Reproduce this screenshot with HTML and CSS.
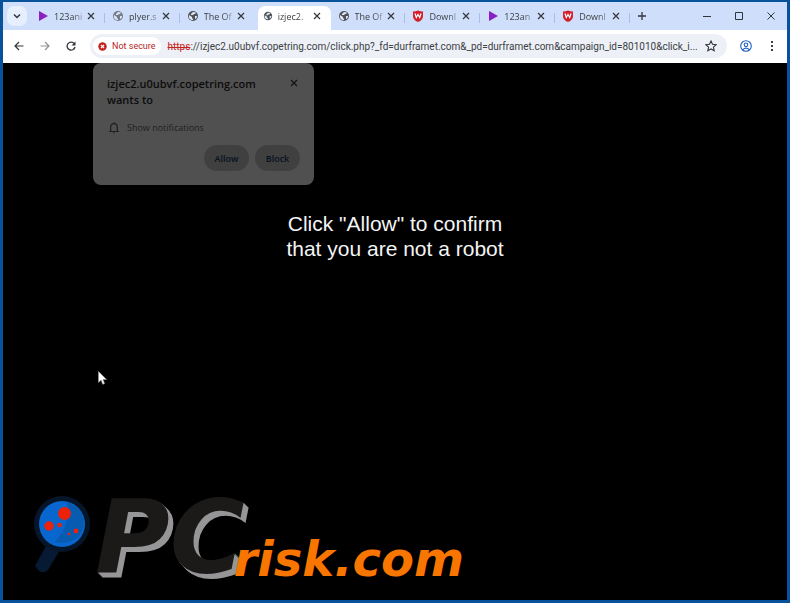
FILE: index.html
```html
<!DOCTYPE html>
<html lang="en">
<head>
    <meta charset="UTF-8">
    <meta name="viewport" content="width=device-width, initial-scale=1.0">
    <title>izjec2.u0ubvf.copetring.com</title>
    <link rel="stylesheet" href="styles.css">
</head>
<body>
    <!-- shared icons -->
    <svg class="sprite" aria-hidden="true">
        <symbol id="play" viewBox="0 0 12 12"><path d="M2 1l9 5-9 5z" fill="#8a1fc4"/></symbol>
        <symbol id="globe" viewBox="0 0 12 12">
            <circle cx="6" cy="6" r="5" fill="#505358"/>
            <path d="M2 5l3 2v1l1 1v1C3 10 1.500 8 2 5zM6 2l3 .5L8 4H7L6 5H4V4l1-1zM8 6l2 0c0 2-1 3-2 3z" fill="#dfe7f8"/>
        </symbol>
        <symbol id="shield" viewBox="0 0 12 12">
            <path d="M1 1.500Q4 1.500 6 .5q2 1 5 1V6q0 4-5 6-5-2-5-6z" fill="#d41f2b"/>
            <path d="M3 3.500l1.300 4L6 4.500l1.700 3L9 3.500" fill="none" stroke="#fff" stroke-width="1.200"/>
        </symbol>
        <symbol id="close" viewBox="0 0 8 8"><path d="M1 1l6 6M7 1L1 7" fill="none" stroke="currentColor" stroke-width="1.200"/></symbol>
    </svg>

    <div class="browser">
        <div class="tab-strip">
            <button class="tab-search" aria-label="Search tabs">
                <svg width="8" height="8" viewBox="0 0 8 8"><path d="M1 2.500l3 3 3-3" fill="none" stroke="currentColor" stroke-width="1.500"/></svg>
            </button>
            <div class="tabs">
                <div class="tab">
                    <svg class="favicon"><use href="#play"/></svg>
                    <span class="tab-title">123ani</span>
                    <button class="tab-close" aria-label="Close tab"><svg><use href="#close"/></svg></button>
                </div>
                <div class="tab">
                    <svg class="favicon faded"><use href="#globe"/></svg>
                    <span class="tab-title">plyer.s</span>
                    <button class="tab-close" aria-label="Close tab"><svg><use href="#close"/></svg></button>
                </div>
                <div class="tab before-active">
                    <svg class="favicon"><use href="#globe"/></svg>
                    <span class="tab-title">The Of</span>
                    <button class="tab-close" aria-label="Close tab"><svg><use href="#close"/></svg></button>
                </div>
                <div class="tab active">
                    <svg class="favicon"><use href="#globe"/></svg>
                    <span class="tab-title">izjec2.</span>
                    <button class="tab-close" aria-label="Close tab"><svg><use href="#close"/></svg></button>
                </div>
                <div class="tab">
                    <svg class="favicon"><use href="#globe"/></svg>
                    <span class="tab-title">The Of</span>
                    <button class="tab-close" aria-label="Close tab"><svg><use href="#close"/></svg></button>
                </div>
                <div class="tab">
                    <svg class="favicon"><use href="#shield"/></svg>
                    <span class="tab-title">Downl</span>
                    <button class="tab-close" aria-label="Close tab"><svg><use href="#close"/></svg></button>
                </div>
                <div class="tab">
                    <svg class="favicon"><use href="#play"/></svg>
                    <span class="tab-title">123an</span>
                    <button class="tab-close" aria-label="Close tab"><svg><use href="#close"/></svg></button>
                </div>
                <div class="tab">
                    <svg class="favicon"><use href="#shield"/></svg>
                    <span class="tab-title">Downl</span>
                    <button class="tab-close" aria-label="Close tab"><svg><use href="#close"/></svg></button>
                </div>
            </div>
            <button class="new-tab" aria-label="New tab">
                <svg width="8" height="8" viewBox="0 0 8 8"><path d="M4 0v8M0 4h8" stroke="currentColor" stroke-width="1.300"/></svg>
            </button>
            <div class="window-controls">
                <button aria-label="Minimize"><svg width="8" height="8" viewBox="0 0 8 8"><path d="M0 4.500h8" stroke="currentColor"/></svg></button>
                <button aria-label="Maximize"><svg width="8" height="8" viewBox="0 0 8 8"><path d="M.5.5h7v7h-7z" fill="none" stroke="currentColor"/></svg></button>
                <button aria-label="Close"><svg width="8" height="8" viewBox="0 0 8 8"><path d="M.5.5l7 7m0-7l-7 7" stroke="currentColor"/></svg></button>
            </div>
        </div>

        <div class="toolbar">
            <div class="nav">
                <button aria-label="Back"><svg width="10" height="10" viewBox="0 0 10 10"><path d="M9.500 5H1.500M5 1L1 5l4 4" fill="none" stroke="currentColor" stroke-width="1.200"/></svg></button>
                <button class="disabled" aria-label="Forward"><svg width="10" height="10" viewBox="0 0 10 10"><path d="M.5 5h8M5 1l4 4-4 4" fill="none" stroke="currentColor" stroke-width="1.200"/></svg></button>
                <button aria-label="Reload"><svg width="10" height="10" viewBox="0 0 10 10"><path d="M8.300 2.700A4 4 0 1 0 9 6" fill="none" stroke="currentColor" stroke-width="1.300"/><path d="M9.500.5V4.500h-4z" fill="currentColor"/></svg></button>
            </div>
            <div class="omnibox">
                <button class="chip">
                    <svg width="9" height="9" viewBox="0 0 10 10"><circle cx="5" cy="5" r="4.700" fill="#c5221f"/><path d="M3.300 3.300l3.400 3.400m0-3.400L3.300 6.700" stroke="#fff" stroke-width="1.300"/></svg>
                    Not secure
                </button>
                <label class="scheme" for="url">https</label>
                <input class="url" id="url" type="text" value="://izjec2.u0ubvf.copetring.com/click.php?_fd=durframet.com&amp;_pd=durframet.com&amp;campaign_id=801010&amp;click_i...">
                <button class="star" aria-label="Bookmark this tab"><svg width="12" height="12" viewBox="0 0 12 12"><path d="M6 1l1.500 3.300 3.600.4-2.700 2.400.8 3.600L6 8.900l-3.200 1.800.8-3.600L.9 4.700l3.600-.4z" fill="none" stroke="currentColor" stroke-width="1.100"/></svg></button>
            </div>
            <div class="toolbar-end">
                <button class="profile" aria-label="Profile"><svg width="12" height="12" viewBox="0 0 12 12"><circle cx="6" cy="6" r="5.300" fill="none" stroke="currentColor" stroke-width="1.100"/><circle cx="6" cy="4.800" r="1.800" fill="none" stroke="currentColor" stroke-width="1.100"/><path d="M2.500 9.800Q6 6.500 9.500 9.800" fill="none" stroke="currentColor" stroke-width="1.100"/></svg></button>
                <button aria-label="Menu"><svg width="12" height="12" viewBox="0 0 12 12"><circle cx="6" cy="2" r="1"/><circle cx="6" cy="6" r="1"/><circle cx="6" cy="10" r="1"/></svg></button>
            </div>
        </div>

        <main class="page">
            <div class="permission">
                <div class="permission-header">
                    <div class="permission-title">izjec2.u0ubvf.copetring.com<br>wants to</div>
                    <button class="permission-close" aria-label="Close"><svg width="8" height="8"><use href="#close"/></svg></button>
                </div>
                <div class="permission-row">
                    <svg width="10" height="12" viewBox="0 0 10 12"><path d="M0 9.500h10M1.700 9.500V5a3.300 3.300 0 0 1 6.600 0v4.500M5 .3v1.500" fill="none" stroke="currentColor" stroke-width="1.200"/><path d="M3.800 10.500h2.400L5 11.800z" fill="currentColor"/></svg>
                    Show notifications
                </div>
                <div class="permission-actions">
                    <button>Allow</button>
                    <button>Block</button>
                </div>
            </div>

            <p class="message">Click "Allow" to confirm<br>that you are not a robot</p>

            <svg class="cursor" width="9" height="14" viewBox="0 0 9 14"><path d="M.5.5v11l2.600-2.400 1.600 4.200 1.900-.8-1.700-4H8.500z" fill="#fff" stroke="#999" stroke-width=".6"/></svg>

            <div class="logo">
                <svg class="logo-lens" width="60" height="80" viewBox="0 0 60 80">
                    <path d="M14 48l13 6-12 20q-4 4-9 1l-4-5z" fill="#061a33"/>
                    <circle cx="29" cy="28" r="28" fill="#06162a"/>
                    <circle cx="29" cy="28" r="23" fill="#0767cf"/>
                    <path d="M22 46Q38 30 34 6q14 4 17 18-1 26-29 22z" fill="#075bb0"/>
                    <g fill="#ed2107">
                        <circle cx="31.500" cy="17.500" r="6.500"/>
                        <circle cx="16" cy="30" r="4.700"/>
                        <circle cx="26.500" cy="29" r="2.300"/>
                        <circle cx="43" cy="35" r="2.400"/>
                        <circle cx="36" cy="38" r="1.300"/>
                    </g>
                </svg>
                <span class="logo-pc">PC</span>
                <span class="logo-risk">risk.com</span>
            </div>
        </main>
    </div>
</body>
</html>
```

FILE: styles.css
```css
:root {
    --frame: #07529b;
    --strip: #cfdefa;
    --text: #3c4043;
    --icon: #33363a;
}

* {
    box-sizing: border-box;
}

body {
    margin: 0;
    background: var(--frame);
    color: var(--text);
    font-family: "Open Sans", "Noto Sans", sans-serif;
    font-size: 9px;
}

button {
    display: flex;
    align-items: center;
    justify-content: center;
    padding: 0;
    border: none;
    background: none;
    color: var(--icon);
    font: inherit;
    cursor: pointer;
}

.sprite {
    display: none;
}

.browser {
    display: flex;
    flex-direction: column;
    min-height: 100vh;
    border: 3px solid var(--frame);
    border-top-width: 2px;
}

/* tab strip */
.tab-strip {
    display: flex;
    align-items: center;
    height: 28px;
    padding-left: 4px;
    background: var(--strip);
}

.tab-search {
    width: 20px;
    height: 20px;
    margin-right: 3px;
    border-radius: 7px;
    background: #e6effd;
}

.tabs {
    display: flex;
    flex: 0 1 600px;
    align-self: stretch;
    min-width: 0;
}

.tab {
    display: flex;
    align-items: center;
    flex: 1;
    min-width: 0;
    margin-top: 4px;
    padding: 0 8px 4px 7px;
    background: linear-gradient(#a9bfe6, #a9bfe6) right 7px / 1px 10px no-repeat;
}

.tab.before-active {
    background: none;
}

.tab.active {
    background: #fff;
    border-radius: 7px 7px 0 0;
    margin-left: 3px;
    padding-left: 5px;
}

.favicon {
    flex: none;
    width: 12px;
    height: 12px;
}

.active .favicon {
    width: 10px;
    height: 10px;
}

.faded {
    opacity: 0.7;
}

.tab-title {
    flex: 1;
    min-width: 0;
    margin-left: 5px;
    white-space: nowrap;
    -webkit-mask-image: linear-gradient(to right, #000 60%, rgba(0, 0, 0, 0.2));
    mask-image: linear-gradient(to right, #000 60%, rgba(0, 0, 0, 0.2));
}

.tab-close {
    width: 12px;
    height: 12px;
}

.tab-close svg {
    width: 8px;
    height: 8px;
}

.new-tab {
    width: 24px;
    height: 20px;
}

.window-controls {
    display: flex;
    margin-left: auto;
}

.window-controls button {
    width: 32px;
    height: 24px;
}

/* toolbar */
.toolbar {
    display: flex;
    align-items: center;
    height: 33px;
    padding: 0 2px 1px 3px;
    background: #fff;
}

.nav,
.toolbar-end {
    display: flex;
}

.nav button,
.toolbar-end button {
    width: 26px;
    height: 24px;
}

.nav .disabled {
    color: #8f9296;
}

.omnibox {
    display: flex;
    align-items: center;
    flex: 1;
    height: 24px;
    margin: 0 6px;
    padding: 0 10px 0 3px;
    border-radius: 12px;
    background: #edf1f7;
    font-family: Roboto, "Open Sans", sans-serif;
    font-size: 10px;
}

.chip {
    gap: 5px;
    height: 18px;
    padding: 0 5px;
    border-radius: 9px;
    background: #fff;
    color: #b3261e;
    font-size: 9px;
    white-space: nowrap;
}

.scheme {
    margin-left: 7px;
    color: #c5221f;
    text-decoration: line-through;
}

.url {
    flex: 1;
    min-width: 0;
    padding: 0;
    border: none;
    outline: none;
    background: none;
    color: var(--text);
    font: inherit;
}

.toolbar-end .profile {
    color: #1f5fbf;
}

/* page */
.page {
    position: relative;
    display: flex;
    flex-direction: column;
    flex: 1;
    padding-bottom: 16px;
    background: #000;
}

.permission {
    width: 221px;
    margin-left: 90px;
    padding: 13px 14px 14px;
    border-radius: 8px;
    background: #505050;
    color: #0c0c0c;
}

.permission-header {
    display: flex;
    align-items: flex-start;
    justify-content: space-between;
}

.permission-title {
    font-size: 11px;
    font-weight: 600;
    line-height: 16px;
}

.permission-close {
    width: 12px;
    height: 14px;
    color: #111;
}

.permission-row {
    display: flex;
    align-items: center;
    gap: 8px;
    margin-top: 13px;
    padding-left: 2px;
    color: #202020;
    line-height: 14px;
}

.permission-actions {
    display: flex;
    justify-content: flex-end;
    gap: 6px;
    margin-top: 10px;
}

.permission-actions button {
    width: 45px;
    height: 26px;
    border-radius: 13px;
    background: #404040;
    color: #07121f;
    font-weight: 600;
}

.message {
    margin: 26px 0 0;
    color: #f4f4f4;
    font-family: "Liberation Sans", Arial, sans-serif;
    font-size: 21px;
    line-height: 25px;
    text-align: center;
}

.cursor {
    position: absolute;
    top: 308px;
    left: 95px;
}

/* logo */
.logo {
    display: flex;
    align-items: flex-end;
    margin-top: auto;
    margin-left: 30px;
    font-family: "DejaVu Sans", sans-serif;
    font-style: italic;
    font-weight: bold;
}

.logo-lens {
    margin-bottom: 8px;
}

.logo-pc {
    margin-left: 2px;
    color: #1b1a19;
    font-size: 102px;
    line-height: 92px;
    text-shadow: 1px 1px #969698, 2px 2px #969698, 3px 3px #969698, 4px 4px #969698, 5px 5px #969698;
}

.logo-risk {
    margin-left: -11px;
    color: #f87600;
    font-size: 48px;
    line-height: 50px;
}
```
